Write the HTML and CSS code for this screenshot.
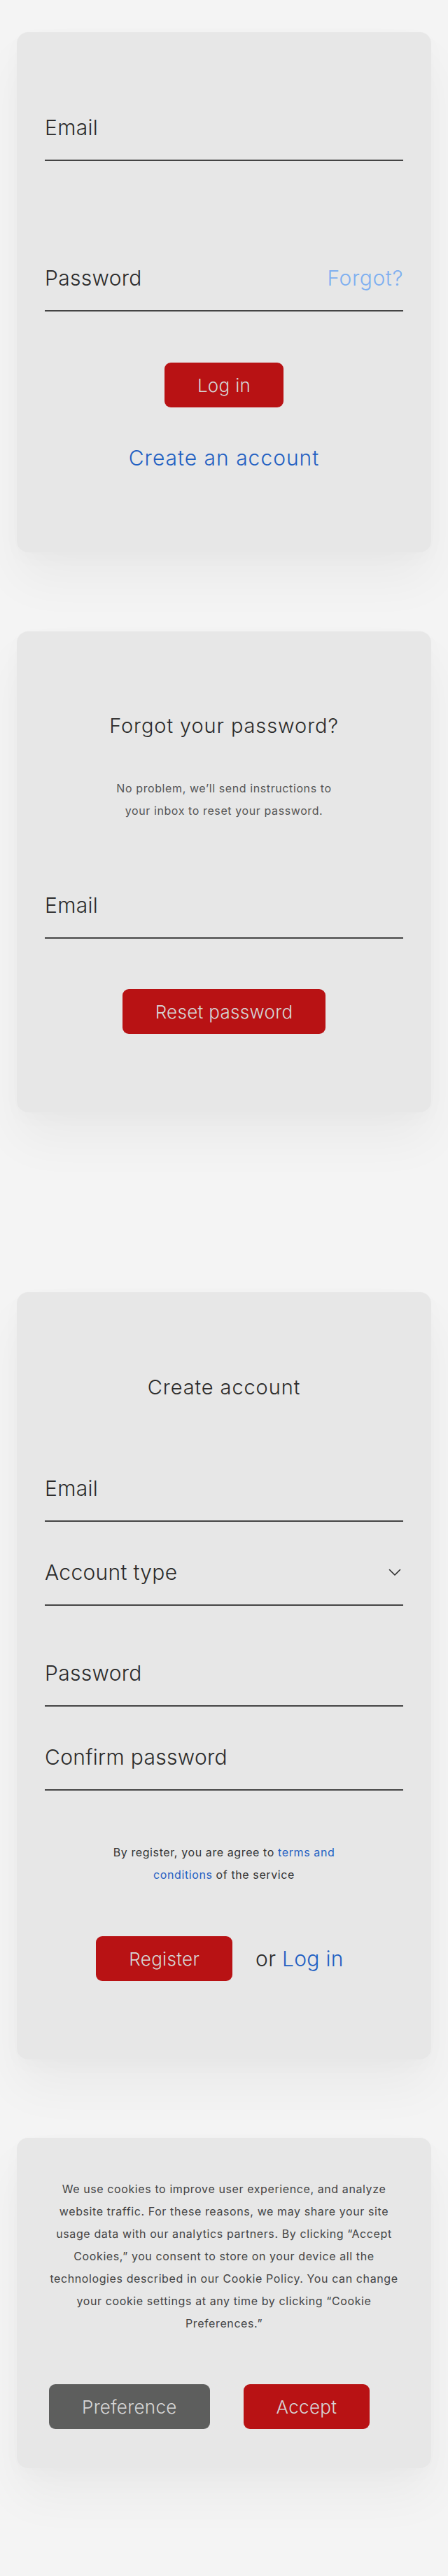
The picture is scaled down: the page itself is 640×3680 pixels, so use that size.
FILE: index.html
```html
<!DOCTYPE html>
<html lang="en">
<head>
<meta charset="utf-8">
<title>Auth screens</title>
<link rel="stylesheet" href="styles.css">
</head>
<body>
<main class="page">
  <section class="card card-login">
    <div class="field field-email1">
      <span class="label">Email</span>
    </div>
    <div class="field field-pass1">
      <span class="label">Password</span>
      <a class="forgot" href="#">Forgot?</a>
    </div>
    <div class="actions actions-login">
      <button class="btn btn-red">Log in</button>
    </div>
    <a class="create-link" href="#">Create an account</a>
  </section>

  <section class="card card-forgot">
    <h2 class="title">Forgot your password?</h2>
    <p class="note">No problem, we’ll send instructions to<br>your inbox to reset your password.</p>
    <div class="field field-email2">
      <span class="label">Email</span>
    </div>
    <div class="actions actions-reset">
      <button class="btn btn-red">Reset password</button>
    </div>
  </section>

  <section class="card card-create">
    <h2 class="title">Create account</h2>
    <div class="field field-email3">
      <span class="label">Email</span>
    </div>
    <div class="field field-type">
      <span class="label">Account type</span>
      <svg class="chevron" width="18" height="11" viewBox="0 0 18 11"><path d="M1.5 1.5 L9 9 L16.5 1.5" fill="none" stroke="#2b2b2b" stroke-width="1.6" stroke-linecap="round" stroke-linejoin="round"/></svg>
    </div>
    <div class="field field-pass3">
      <span class="label">Password</span>
    </div>
    <div class="field field-confirm">
      <span class="label">Confirm password</span>
    </div>
    <p class="note terms">By register, you are agree to <a href="#">terms and</a><br><a href="#">conditions</a> of the service</p>
    <div class="actions actions-register">
      <button class="btn btn-red btn-register">Register</button>
      <span class="or">or <a href="#">Log in</a></span>
    </div>
  </section>

  <section class="card card-cookie">
    <p class="note cookie-text">We use cookies to improve user experience, and analyze<br>website traffic. For these reasons, we may share your site<br>usage data with our analytics partners. By clicking “Accept<br>Cookies,” you consent to store on your device all the<br>technologies described in our Cookie Policy. You can change<br>your cookie settings at any time by clicking “Cookie<br>Preferences.”</p>
    <div class="cookie-actions">
      <button class="btn btn-grey btn-pref">Preference</button>
      <button class="btn btn-red btn-accept">Accept</button>
    </div>
  </section>
</main>
</body>
</html>
```
FILE: styles.css
```css
* { box-sizing: border-box; }

html, body {
  margin: 0;
  padding: 0;
  background: #f4f4f4;
}

body {
  font-family: "Inter", "Noto Sans", sans-serif;
  font-weight: 300;
  color: #2b2b2b;
}

.page {
  display: flex;
  flex-direction: column;
  padding: 46px 24px 154px;
}

.card {
  background: #e7e7e7;
  border-radius: 16px;
  box-shadow: 0 40px 70px rgba(0, 0, 0, 0.045), 0 8px 30px rgba(0, 0, 0, 0.02);
  padding: 0 40px;
  display: flex;
  flex-direction: column;
}

.card-login { height: 743px; padding-top: 118px; }
.card-forgot { height: 687px; margin-top: 113px; padding-top: 117px; }
.card-create { height: 1096px; margin-top: 257px; padding-top: 118px; }
.card-cookie { height: 472px; margin-top: 112px; padding-top: 57px; }

.field {
  display: flex;
  justify-content: space-between;
  align-items: center;
  padding-bottom: 28px;
  border-bottom: 2px solid #444;
}

.label {
  font-size: 30px;
  line-height: 36px;
  letter-spacing: 0.3px;
  color: #2b2b2b;
}

.forgot {
  font-size: 30px;
  line-height: 36px;
  letter-spacing: 0.6px;
  color: #7eaff0;
  text-decoration: none;
}

.chevron {
  margin-right: 3px;
  display: block;
}

.field-pass1 { margin-top: 149px; }

.actions {
  display: flex;
  justify-content: center;
  align-items: center;
}

.actions-login { margin-top: 73px; }

.btn {
  height: 64px;
  padding: 0 47px;
  border: 0;
  border-radius: 9px;
  font-family: "Inter", "Noto Sans", sans-serif;
  font-weight: 300;
  font-size: 26px;
  letter-spacing: 0.3px;
  color: #d6d6d6;
  cursor: pointer;
}

.btn-red { background: #b81214; }
.btn-grey { background: #5d5e5d; }

.create-link {
  margin-top: 54px;
  text-align: center;
  font-size: 30px;
  line-height: 36px;
  letter-spacing: 1px;
  color: #1f60c2;
  text-decoration: none;
}

.title {
  margin: 0;
  text-align: center;
  font-size: 29px;
  line-height: 36px;
  letter-spacing: 0.9px;
  font-weight: 300;
  color: #2b2b2b;
}

.note {
  margin: 0;
  text-align: center;
  font-size: 16px;
  line-height: 32px;
  letter-spacing: 0.6px;
  font-weight: 400;
  color: #555;
}

.card-forgot .note { margin-top: 55px; }
.field-email2 { margin-top: 101px; }
.actions-reset { margin-top: 72px; }

.field-email3 { margin-top: 108px; }
.field-type { margin-top: 54px; }
.field-pass3 { margin-top: 78px; }
.field-confirm { margin-top: 54px; }

.terms { margin-top: 72px; color: #333; }
.terms a { color: #1f60c2; text-decoration: none; }

.actions-register { margin-top: 72px; gap: 33px; padding-right: 12px; }

.or {
  font-size: 30px;
  line-height: 36px;
  letter-spacing: 0.3px;
  color: #2b2b2b;
}
.or a { color: #1f60c2; text-decoration: none; }

.cookie-text { color: #444; }

.cookie-actions {
  display: flex;
  gap: 48px;
  margin-top: 71px;
  padding-left: 6px;
}
```
